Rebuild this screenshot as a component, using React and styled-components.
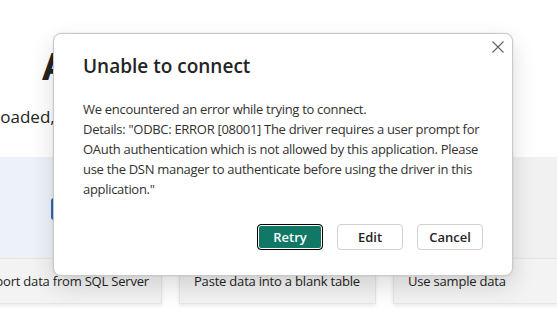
import React from 'react'
import styled, { createGlobalStyle } from 'styled-components'

const GlobalStyle = createGlobalStyle`
  body {
    margin: 0;
    background: #fff;
    font-family: 'Segoe UI', 'Open Sans', 'Noto Sans', sans-serif;
    color: #242424;
  }
`

export default function App() {
  return (
    <Page>
      <GlobalStyle />
      <Heading>Add data to your report</Heading>
      <Subtitle>loaded, your data will appear in the Data pane.</Subtitle>
      <Band>
        <PrimaryButton>Get data</PrimaryButton>
      </Band>
      <CardRow>
        <Card>Import data from SQL Server</Card>
        <Card>Paste data into a blank table</Card>
        <Card>Use sample data</Card>
      </CardRow>

      <Dialog role='dialog'>
        <CloseButton aria-label='Close'>
          <svg width='12' height='12' viewBox='0 0 12 12'>
            <path d='M0.5 0.5 L11.5 11.5 M11.5 0.5 L0.5 11.5' stroke='#616161' strokeWidth='1.1' />
          </svg>
        </CloseButton>
        <Title>Unable to connect</Title>
        <Body>
          We encountered an error while trying to connect.
          <br />
          Details: "ODBC: ERROR [08001] The driver requires a user prompt for
          OAuth authentication which is not allowed by this application. Please
          use the DSN manager to authenticate before using the driver in this
          application."
        </Body>
        <Actions>
          <Button primary>Retry</Button>
          <Button>Edit</Button>
          <Button>Cancel</Button>
        </Actions>
      </Dialog>
    </Page>
  )
}

const Page = styled.div`
  position: relative;
  width: 557px;
  height: 321px;
  overflow: hidden;
  background: #fff;
`

const Heading = styled.h1`
  margin: 0;
  padding: 42px 0 0 42px;
  font-size: 38px;
  line-height: 46px;
  font-weight: 700;
  white-space: nowrap;
  color: #242424;
`

const Subtitle = styled.p`
  margin: 17px 0 0 -4px;
  font-size: 17px;
  line-height: 24px;
  white-space: nowrap;
  color: #242424;
`

const Band = styled.div`
  margin-top: 28px;
  height: 101px;
  box-sizing: border-box;
  padding: 41px 0 0 51px;
  background: linear-gradient(90deg, #edf2f9 0%, #eff2f6 60%, #f1f1f1 100%);
`

const PrimaryButton = styled.div`
  width: 120px;
  height: 22px;
  border-radius: 3px;
  background: #2a6cb0;
  color: #fff;
  font-size: 13px;
  line-height: 22px;
  text-align: center;
`

const CardRow = styled.div`
  display: flex;
  gap: 17px;
  margin-left: -35px;
`

const Card = styled.div`
  flex: 0 0 197px;
  min-width: 0;
  overflow: hidden;
  box-sizing: border-box;
  height: 46px;
  padding: 0 14px;
  display: flex;
  align-items: center;
  background: #f3f3f3;
  border: 1px solid #e6e6e6;
  box-shadow: 0 2px 4px rgba(0, 0, 0, 0.08);
  font-size: 13px;
  letter-spacing: -0.2px;
  white-space: nowrap;
  color: #242424;
`

const Dialog = styled.div`
  position: absolute;
  left: 53px;
  top: 33px;
  width: 460px;
  height: 243px;
  box-sizing: border-box;
  padding: 18px 29px 0 29px;
  background: #fff;
  border: 1px solid #c9c9c9;
  border-radius: 8px;
  box-shadow: 0 0 2px rgba(0, 0, 0, 0.12), 0 10px 24px rgba(0, 0, 0, 0.14);
  display: flex;
  flex-direction: column;
`

const CloseButton = styled.button`
  position: absolute;
  top: 3px;
  right: 4px;
  width: 20px;
  height: 20px;
  padding: 0;
  border: none;
  background: none;
  display: flex;
  align-items: center;
  justify-content: center;
`

const Title = styled.h2`
  margin: 0;
  font-size: 19px;
  line-height: 28px;
  font-weight: 600;
  color: #242424;
`

const Body = styled.p`
  margin: 19px 0 0 0;
  font-size: 13px;
  letter-spacing: -0.3px;
  line-height: 20px;
  color: #323130;
`

const Actions = styled.div`
  display: flex;
  justify-content: flex-end;
  gap: 14px;
  margin-top: 25px;
`

const Button = styled.button`
  width: 66px;
  height: 26px;
  box-sizing: border-box;
  border-radius: 4px;
  font-family: inherit;
  font-size: 13px;
  font-weight: 600;
  padding: 0;
  cursor: pointer;
  color: ${p => (p.primary ? '#fff' : '#242424')};
  background: ${p => (p.primary ? '#117865' : '#fff')};
  border: 1px solid ${p => (p.primary ? '#000' : '#d1d1d1')};
  box-shadow: ${p => (p.primary ? 'inset 0 0 0 1px #fff' : 'none')};
`
